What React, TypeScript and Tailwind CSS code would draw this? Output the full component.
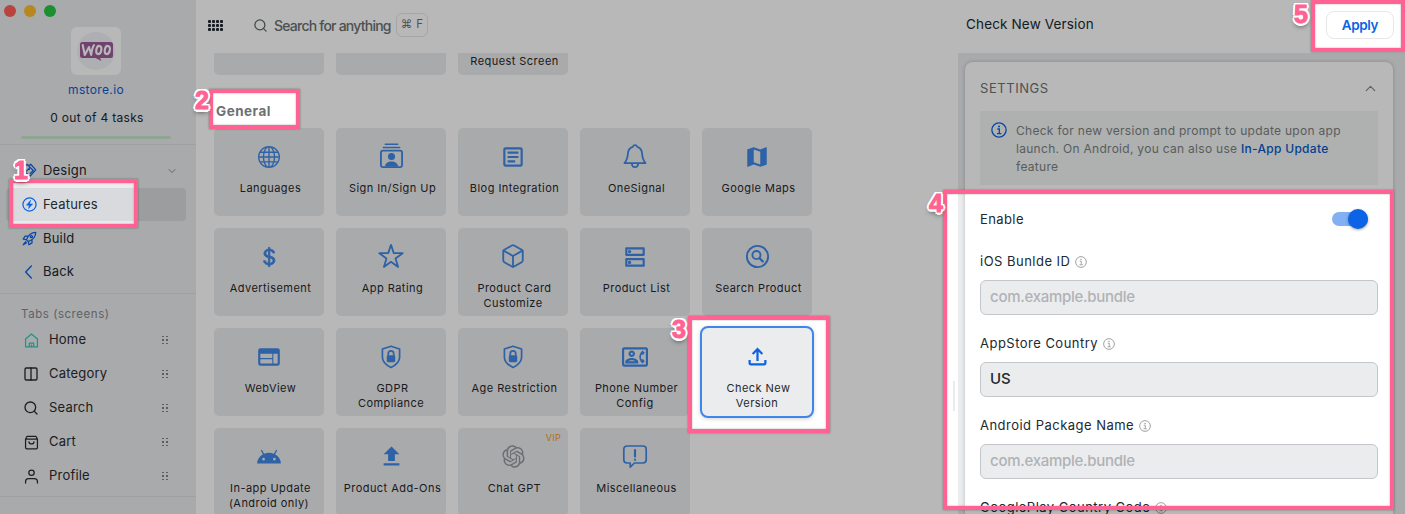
import React from "react";
import { BsGlobe, BsCurrencyDollar } from "react-icons/bs";
import { MdOutlineArticle, MdMap, MdWeb, MdOutlineDns, MdOutlineContactPhone, MdAndroid } from "react-icons/md";
import { RiOpenaiFill } from "react-icons/ri";
import { Box, Search, ChevronDown, ChevronUp, ChevronLeft, Columns2 } from "lucide-react";

type StrokeProps = { size?: number; width?: number; className?: string; children: React.ReactNode };

function Stroke({ size = 24, width = 2, className = "", children }: StrokeProps) {
  return (
    <svg width={size} height={size} viewBox="0 0 24 24" fill="none" stroke="currentColor" strokeWidth={width} strokeLinecap="round" strokeLinejoin="round" className={className}>
      {children}
    </svg>
  );
}

const ShieldLock = () => (
  <Stroke size={24} width={1.7}>
    <path d="M12 1.2 20.6 4v8.2c0 4.6-3.6 7.8-8.6 10.2-5-2.4-8.6-5.6-8.6-10.2V4z" />
    <path d="M9.3 11V8.6a2.7 2.7 0 0 1 5.4 0V11" />
    <rect x="8.6" y="11" width="6.8" height="5.4" rx=".6" fill="currentColor" />
  </Stroke>
);

const People = () => (
  <svg width="25" height="27" viewBox="0 0 26 28" fill="none" stroke="currentColor" className="mb-[2px]">
    <path d="M6.5 2.2h13M4.5 5.7h17" strokeWidth="1.5" strokeLinecap="round" />
    <rect x="2" y="9" width="22" height="17" rx="2.2" strokeWidth="1.9" />
    <circle cx="13" cy="15" r="3.7" fill="currentColor" stroke="none" />
    <path d="M6 25.5c.6-3.4 3.400-5.300 7-5.300s6.400 1.900 7 5.300z" fill="currentColor" stroke="none" />
  </svg>
);

const Bell = () => (
  <Stroke size={26} width={1.6} className="mb-[2px]">
    <path d="M2.300 18.600c2.700-3.200 2.900-5.400 3.200-9C5.700 6.400 7.500 4.200 10 3.500a2.100 2.100 0 0 1 4 0c2.500.7 4.300 2.900 4.500 6.100.3 3.600.5 5.800 3.200 9z" />
    <path d="M9 19c.2 2 1.400 3.200 3 3.200s2.800-1.200 3-3.200" />
  </Stroke>
);

const Star = () => (
  <svg width="26" height="26" viewBox="0 0 26 26" fill="none" stroke="currentColor" strokeWidth="1.8" strokeLinejoin="round" className="mb-[2px]">
    <path d="m13 1.800 2.750 8.300 8.950.1-7.200 5.200 2.600 8.500-7.100-5.100-7.100 5.100 2.600-8.500-7.200-5.200 8.950-.1z" />
  </svg>
);

const SearchCircle = () => (
  <Stroke size={25} width={1.8}>
    <circle cx="12" cy="12" r="10.2" />
    <circle cx="11" cy="10.600" r="3.900" />
    <path d="m14 13.700 3 3" strokeWidth="2.200" />
  </Stroke>
);

const UploadTray = () => (
  <svg width="27" height="27" viewBox="0 0 24 24" fill="currentColor">
    <path d="M18 15v3H6v-3H4v3c0 1.100.9 2 2 2h12c1.100 0 2-.9 2-2v-3h-2zM7 9l1.410 1.410L11 7.830V16h2V7.830l2.590 2.580L17 9l-5-5-5 5z" />
  </svg>
);

const UploadSolid = () => (
  <svg width="27" height="27" viewBox="0 0 24 24" fill="currentColor">
    <path d="M5 20h14v-2H5v2zm0-10h4v6h6v-6h4l-7-7-7 7z" />
  </svg>
);

const Bubble = () => (
  <svg width="26" height="26" viewBox="0 0 26 26" fill="none" stroke="currentColor" strokeWidth="1.700" strokeLinejoin="round" strokeLinecap="round">
    <path d="M5 2h16a3.200 3.200 0 0 1 3.200 3.200v10.600A3.200 3.200 0 0 1 21 19h-8.500l-4.300 4.200V19H5a3.200 3.200 0 0 1-3.200-3.200V5.200A3.200 3.200 0 0 1 5 2z" />
    <path d="M13 6v6.500M13 15.700v.1" strokeWidth="2.200" />
  </svg>
);

type Feature = { icon: React.ReactNode; lines: string[]; active?: boolean; vip?: boolean };

const features: Feature[] = [
  { icon: <BsGlobe size={22} />, lines: ["Languages"] },
  { icon: <People />, lines: ["Sign In/Sign Up"] },
  { icon: <MdOutlineArticle size={26} />, lines: ["Blog Integration"] },
  { icon: <Bell />, lines: ["OneSignal"] },
  { icon: <MdMap size={26} />, lines: ["Google Maps"] },
  { icon: <BsCurrencyDollar size={22} stroke="currentColor" strokeWidth={0.6} />, lines: ["Advertisement"] },
  { icon: <Star />, lines: ["App Rating"] },
  { icon: <Box size={26} strokeWidth={1.7} className="mb-[2px]" />, lines: ["Product Card", "Customize"] },
  { icon: <MdOutlineDns size={26} />, lines: ["Product List"] },
  { icon: <SearchCircle />, lines: ["Search Product"] },
  { icon: <MdWeb size={26} />, lines: ["WebView"] },
  { icon: <ShieldLock />, lines: ["GDPR", "Compliance"] },
  { icon: <ShieldLock />, lines: ["Age Restriction"] },
  { icon: <MdOutlineContactPhone size={26} />, lines: ["Phone Number", "Config"] },
  { icon: <UploadTray />, lines: ["Check New", "Version"], active: true },
  { icon: <MdAndroid size={26} />, lines: ["In-app Update", "(Android only)"] },
  { icon: <UploadSolid />, lines: ["Product Add-Ons"] },
  { icon: <RiOpenaiFill size={27} />, lines: ["Chat GPT"], vip: true },
  { icon: <Bubble />, lines: ["Miscellaneous"] },
];

function Label({ lines }: { lines: string[] }) {
  return (
    <div className="flex flex-col items-center whitespace-nowrap pt-px text-[11px] leading-[15px] tracking-[0.450px] text-[#26282c]">
      {lines.map((l, i) => (
        <span key={l} className={i === 0 ? "pl-[3px]" : ""}>
          {l}
        </span>
      ))}
    </div>
  );
}

function FeatureCard({ f }: { f: Feature }) {
  const frame = f.active
    ? "-m-[2px] h-[92px] w-[114px] rounded-lg border-2 border-[#3f86ea] shadow-[0_1px_4px_rgba(0,0,0,0.18)]"
    : "h-[88px] w-[110px] rounded-[5px]";
  return (
    <div className={`relative flex flex-col items-center bg-[#ebecee] ${frame}`}>
      <div className={`flex h-[52px] items-center justify-center pt-[5px] ${f.vip ? "text-[#96999e]" : f.active ? "text-[#0b63e5]" : "text-[#4088e8]"}`}>{f.icon}</div>
      <Label lines={f.lines} />
      {f.vip && <span className="absolute right-[7px] top-[4px] text-[9px] leading-[11px] tracking-[0.3px] text-[#f59a1b]">VIP</span>}
    </div>
  );
}

function DragDots() {
  return (
    <div className="grid grid-cols-2 gap-x-[2px] gap-y-[2px]">
      {Array.from({ length: 6 }, (_, i) => (
        <i key={i} className="h-[1.500px] w-[2px] bg-[#808388]" />
      ))}
    </div>
  );
}

const tabs: [string, React.ReactNode][] = [
  ["Home", <Stroke size={15} className="text-[#36c8bb]"><path d="M2.500 9.500 12 1.500l9.500 8V22h-19zM8.500 22v-6h7v6M12 19v3" /></Stroke>],
  ["Category", <Columns2 size={16} strokeWidth={2} />],
  ["Search", <Search size={16} strokeWidth={2} />],
  ["Cart", <Stroke size={15}><path d="M2.500 6.500 5 2h14l2.500 4.500V20a2 2 0 0 1-2 2h-15a2 2 0 0 1-2-2zM2.500 6.500h19M8 11c.5 4.500 7.500 4.500 8 0" /></Stroke>],
  ["Profile", <Stroke size={15}><circle cx="12" cy="6" r="4.300" /><path d="M2.500 22.500v-2c0-3 2-5 5-5h9c3 0 5 2 5 5v2" /></Stroke>],
];

function NavRow({ icon, label, active, chevron }: { icon: React.ReactNode; label: string; active?: boolean; chevron?: boolean }) {
  return (
    <div className={`ml-[6px] mr-[10px] flex h-[33px] items-center rounded-[4px] pl-[15px] pr-[8px] text-[13px] tracking-[0.2px] ${active ? "bg-[#d8dadd]" : ""}`}>
      <span className="flex w-[16px] justify-center text-[#0b63e5]">{icon}</span>
      <span className="ml-[6px] flex-1">{label}</span>
      {chevron && <ChevronDown size={12} strokeWidth={2} className="text-[#8b8e93]" />}
    </div>
  );
}

function Sidebar() {
  return (
    <aside className="flex h-full w-[196px] shrink-0 flex-col bg-[#ebecee] text-[#20292f]">
      <div className="flex h-[27px] gap-[8px] pl-[4px] pt-[5px]">
        <i className="size-[12px] rounded-full bg-[#ff5f57]" />
        <i className="size-[12px] rounded-full bg-[#febc2e]" />
        <i className="size-[12px] rounded-full bg-[#28c840]" />
      </div>
      <div className="ml-[71px] flex h-[48px] w-[50px] items-center justify-center rounded-[6px] bg-white">
        <div className="flex size-[38px] items-center justify-center rounded-full bg-[#f1f3f9]">
          <svg width="33" height="20" viewBox="0 0 33 20" className="shrink-0">
            <path d="M2.500 1h28A2.500 2.500 0 0 1 33 3.500v11a2.500 2.500 0 0 1-2.500 2.500H20l1.500 3-6-3h-13A2.500 2.500 0 0 1 0 14.500v-11A2.500 2.500 0 0 1 2.500 1z" fill="#9b5c98" />
            <g fill="none" stroke="#fff" strokeWidth="2.100" strokeLinecap="round" strokeLinejoin="round">
              <path d="m2.700 4 2.100 10L9 6l2.200 8q.8-7 2.800-10" />
              <ellipse cx="18.800" cy="9" rx="2.500" ry="4.100" transform="rotate(12 18.800 9)" />
              <ellipse cx="27.300" cy="9" rx="2.500" ry="4.100" transform="rotate(12 27.300 9)" />
            </g>
          </svg>
        </div>
      </div>
      <div className="flex h-[30px] items-center justify-center pr-[4px] text-[12px] tracking-[0.35px] text-[#0b5bd3]">mstore.io</div>
      <div className="flex h-[27px] items-center justify-center pb-[2px] pr-[2px] text-[12px] tracking-[0.3px]">0 out of 4 tasks</div>
      <div className="ml-[21px] mt-[4px] h-[3px] w-[150px] rounded bg-[#c8e6cf]" />
      <div className="mt-[5px] h-px bg-[#dcdee1]" />
      <div className="mt-[9px] flex flex-col">
        <NavRow label="Design" chevron icon={<Stroke size={15}><path d="m2 8 6-6 5 5-6 6zM11 4l3-2 8 9-10 11-5-6M13 7l5 5-5 5M11 10h1" /></Stroke>} />
        <div className="mt-[1px]" />
        <NavRow label="Features" active icon={<Stroke size={15} width={2}><circle cx="12" cy="12" r="10.500" /><path d="M13.500 5.500 7 13h4.500l-1 5.500L17 11h-4.500z" fill="currentColor" strokeWidth=".8" /></Stroke>} />
        <div className="mt-[1px]" />
        <NavRow label="Build" icon={<Stroke size={15}><path d="M22 2c-7 0-12 4-15 12l3 3c8-3 12-8 12-15zM9 8H5l-3 5 5 1M16 15v4l-5 3-1-5M6 17l-4 5 5-3" /><circle cx="15" cy="9" r="1.700" /></Stroke>} />
        <NavRow label="Back" icon={<Stroke size={16}><path d="M15.500 3 7 12l8.500 9" /></Stroke>} />
      </div>
      <div className="mt-[5px] h-px shrink-0 bg-[#dcdee1]" />
      <div className="mt-[13px] flex h-[16px] items-center pl-[21px] text-[11.500px] tracking-[0.550px] text-[#85888d]">Tabs (screens)</div>
      <div className="flex flex-col">
        {tabs.map(([name, icon]) => (
          <div key={name} className="flex h-[34px] items-center pl-[23px] pr-[28px] text-[13px] tracking-[0.2px] text-[#292b2e]">
            <span className="flex w-[16px] justify-center">{icon}</span>
            <span className="ml-[10px] flex-1">{name}</span>
            <DragDots />
          </div>
        ))}
      </div>
      <div className="mt-[3px] h-px shrink-0 bg-[#dcdee1]" />
    </aside>
  );
}

function Catalog() {
  return (
    <main className="flex h-full flex-1 flex-col overflow-hidden bg-white">
      <div className="flex h-[53px] shrink-0 items-center pb-[3px] pl-[12px]">
        <div className="grid grid-cols-4 gap-[1px]">
          {Array.from({ length: 12 }, (_, i) => (
            <i key={i} className="size-[3px] rounded-[1px] bg-[#20292f]" />
          ))}
        </div>
        <Search size={15} strokeWidth={2} className="ml-[30px] text-[#5e6467]" />
        <span className="ml-[6px] w-[117px] whitespace-nowrap text-[14px] font-medium tracking-[-0.780px] text-[#6a6f72]">Search for anything</span>
        <span className="ml-[5px] flex h-[24px] w-[32px] items-center justify-center whitespace-nowrap rounded-[6px] border border-[#e4e5e7] text-[11.500px] tracking-[0.300px] text-[#6e7376]">⌘ F</span>
      </div>
      <div className="flex h-[22px] shrink-0 gap-[12px] pl-[18px]">
        <div className="w-[110px] rounded-b-[5px] bg-[#ebecee]" />
        <div className="w-[110px] rounded-b-[5px] bg-[#ebecee]" />
        <div className="w-[110px] rounded-b-[5px] bg-[#ebecee]">
          <Label lines={["Request Screen"]} />
        </div>
      </div>
      <h2 className="flex h-[53px] shrink-0 items-center pl-[20px] pt-[20px] text-[13.500px] font-bold tracking-[0.500px] text-[#6d7073]">General</h2>
      <div className="grid shrink-0 grid-cols-[repeat(5,110px)] gap-[12px] pl-[18px]">
        {features.map((f) => (
          <FeatureCard key={f.lines[0]} f={f} />
        ))}
      </div>
    </main>
  );
}

function Info({ size, className }: { size: number; className: string }) {
  return (
    <svg width={size} height={size} viewBox="0 0 24 24" fill="none" stroke="currentColor" className={`shrink-0 ${className}`}>
      <circle cx="12" cy="12" r="10.700" strokeWidth="2" />
      <path d="M9.500 10.500h3v7M9 17.500h6.500" strokeWidth="1.900" />
      <circle cx="12" cy="6.800" r="1.500" fill="currentColor" stroke="none" />
    </svg>
  );
}

function Field({ label, value, placeholder }: { label: string; value?: string; placeholder?: string }) {
  return (
    <div className="flex h-[82px] flex-col">
      <div className="flex h-[39px] items-center gap-[5px] pt-[3px] text-[13px] tracking-[0.480px] text-[#20292f]">
        {label}
        <Info size={12} className="text-[#9fa1a4]" />
      </div>
      <div className={`flex h-[35px] items-center rounded-[6px] border border-[#c5c6c9] bg-[#ebecee] px-[9px] text-[15px] font-medium ${value ? "text-[#20292f]" : "tracking-[-0.280px] text-[#b0b2b5]"}`}>
        {value ?? placeholder}
      </div>
    </div>
  );
}

function SettingsPanel() {
  return (
    <section className="flex h-full w-[452px] shrink-0 flex-col overflow-hidden bg-white">
      <header className="flex h-[53px] shrink-0 items-center justify-between pb-[3px] pl-[13px] pr-[11px]">
        <span className="pb-[2px] text-[13.500px] tracking-[0.150px] text-[#20292f]">Check New Version</span>
        <button className="h-[28px] w-[68px] rounded-[8px] border border-[#e6e7e9] text-[13.500px] font-semibold tracking-[-0.400px] text-[#0b63e5]">Apply</button>
      </header>
      <div className="flex flex-1 items-stretch overflow-hidden">
        <div className="flex w-[5px] shrink-0 items-start pt-[328px]">
          <i className="h-[30px] w-[2px] bg-[#e9eaec]" />
        </div>
        <div className="flex-1 bg-[#ebecee] pl-[7px] pr-[12px] pt-[9px]">
          <div className="h-[600px] rounded-t-[8px] bg-white px-[15px] shadow-[0_0_4px_rgba(0,0,0,0.2)]">
            <div className="flex h-[49px] items-center justify-between pt-[4px] text-[13px] tracking-[0.550px] text-[#6e7173]">
              SETTINGS
              <ChevronUp size={17} strokeWidth={1.700} className="mr-[-1px] text-[#85888b]" />
            </div>
            <div className="flex h-[74px] bg-[#f1f5f3] pl-[11px] pt-[11px]">
              <Info size={16} className="text-[#0b63e5]" />
              <p className="ml-[9px] whitespace-nowrap text-[12px] leading-[18px] tracking-[0.290px] text-[#7d8183]">
                Check for new version and prompt to update upon app
                <br />
                launch. On Android, you can also use <span className="font-medium text-[#0b57c8]">In-App Update</span>
                <br />
                feature
              </p>
            </div>
            <div className="flex h-[56px] items-center justify-between pr-[10px] pt-[11px] text-[13px] tracking-[0.400px] text-[#20292f]">
              <span className="pt-[2px]">Enable</span>
              <span className="flex h-[14px] w-[36px] items-center justify-end rounded-full bg-[#82b0f2]">
                <i className="size-[20px] shrink-0 rounded-full bg-[#0b63e5] shadow-[0_1px_3px_rgba(0,0,0,0.35)]" />
              </span>
            </div>
            <Field label="iOS Bunlde ID" placeholder="com.example.bundle" />
            <Field label="AppStore Country" value="US" />
            <Field label="Android Package Name" placeholder="com.example.bundle" />
            <Field label="GooglePlay Country Code" placeholder="US" />
          </div>
        </div>
      </div>
    </section>
  );
}

const digit =
  "absolute font-['Liberation_Sans',sans-serif] text-[25px] leading-[24px] font-bold text-[#ff6293] [-webkit-text-stroke:1px_#ff6293] [text-shadow:2.500px_0_0_white,-2.500px_0_0_white,0_2.500px_0_white,0_-2.500px_0_white,1.800px_1.800px_0_white,-1.800px_1.800px_0_white,1.800px_-1.800px_0_white,-1.800px_-1.800px_0_white,0_3px_5px_rgba(0,0,0,0.7)]";
const frame = "absolute border-[4.500px] border-[#ff6293] shadow-[0_0_2px_rgba(0,0,0,0.35),inset_0_0_2px_rgba(0,0,0,0.35)]";

function Annotations() {
  return (
    <div className="pointer-events-none absolute inset-0 overflow-hidden">
      <div className="absolute inset-0 bg-black/28 [clip-path:path(evenodd,'M0_0H1405V514H0ZM12_182H135V225H12ZM212_92H298V126H212ZM691_319H828V430H691ZM946_193H1391V507H946ZM1315_3H1403V49H1315Z')]" />
      <div className={`${frame} left-[9px] top-[179px] h-[49px] w-[129px]`} />
      <div className={`${frame} left-[209px] top-[89px] h-[40px] w-[91px]`} />
      <div className={`${frame} left-[688px] top-[316px] h-[117px] w-[142px]`} />
      <div className={`${frame} left-[943px] top-[190px] h-[320px] w-[451px]`} />
      <div className={`${frame} left-[1311px] top-0 h-[52px] w-[94px]`} />
      <span className={`${digit} left-[14px] top-[158px]`}>1</span>
      <span className={`${digit} left-[195px] top-[88px]`}>2</span>
      <span className={`${digit} left-[672px] top-[317px]`}>3</span>
      <span className={`${digit} left-[929px] top-[191px]`}>4</span>
      <span className={`${digit} left-[1294px] top-[2px]`}>5</span>
    </div>
  );
}

export default function App() {
  return (
    <div className="relative flex h-[514px] w-[1405px] overflow-hidden bg-white font-['Inter',sans-serif]">
      <Sidebar />
      <Catalog />
      <SettingsPanel />
      <Annotations />
    </div>
  );
}
